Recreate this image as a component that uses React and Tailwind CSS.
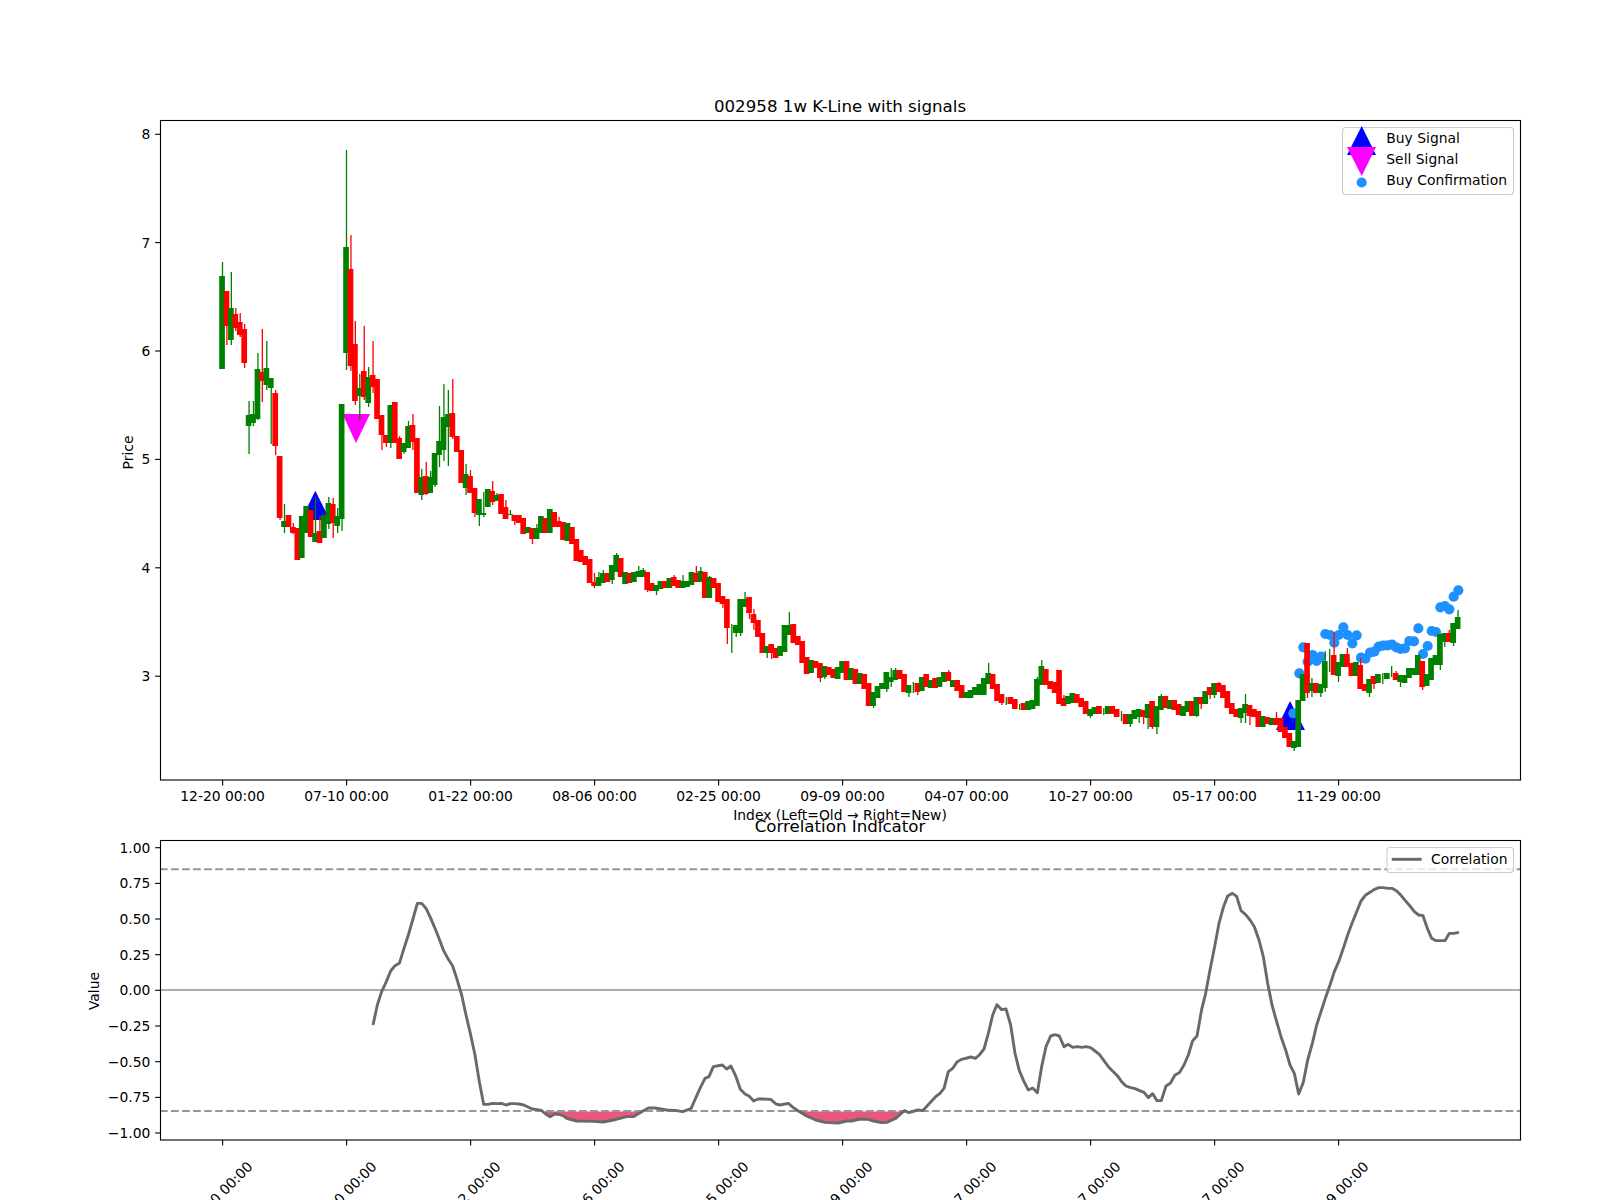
import React from "react";

const text = "font-['DejaVu_Sans',sans-serif] text-[13.89px] fill-black";
const title = "font-['DejaVu_Sans',sans-serif] text-[16.67px] fill-black";

const tickNames = ["12-20 00:00", "07-10 00:00", "01-22 00:00", "08-06 00:00", "02-25 00:00", "09-09 00:00", "04-07 00:00", "10-27 00:00", "05-17 00:00", "11-29 00:00"];
const candleX = (i) => 222.6 + 4.4286 * i;

// [up, bodyTop, bodyBottom, wickTop, wickBottom] read off in pixels, 1 = green, 0 = red
const candles = [
  [1,276,369,262,369],[0,291,326,291,345],[1,308,340,272,345],[0,314,328,308,331],[0,322,335,313,337],[0,329,363,324,368],
  [1,415,426,401,454],[1,414,423,401,426],[1,369,419,353,420],[0,372,381,329,402],[1,368,385,341,390],[1,378,388,378,444],
  [0,393,446,390,455],[0,456,518,456,520],[1,521,527,504,533],[0,515,527],[0,527,533,523,534],[0,528,560],
  [1,516,558],[1,506,533],[0,510,537],[1,533,542,497,542],[0,531,543,516,543],[1,515,538],
  [1,503,524,497,529],[0,504,523,498,538],[1,516,526,508,533],[1,404,519,404,531],[1,247,353,150,370],[0,269,366,235,371],
  [0,344,401,321,405],[1,388,396,374,420],[0,371,397,326,400],[1,377,403,367,407],[0,375,387,341,393],[0,379,419],
  [0,415,435,415,450],[0,435,443,435,447],[1,405,443,405,448],[0,402,443],[0,438,459,436,459],[1,443,452,443,454],
  [1,426,448,421,448],[0,425,442,414,450],[0,438,493],[1,477,495,469,500],[0,476,494,462,495],[1,477,493,471,493],
  [1,453,485,453,487],[1,441,455,406,467],[1,417,450,384,461],[1,414,427,390,466],[0,413,437,379,439],[0,436,452],
  [0,450,483],[1,474,488,464,495],[0,476,493,470,493],[0,488,513,488,517],[1,499,515,499,526],[1,513,515,492,517],
  [1,489,507],[0,491,502,481,505],[1,495,501,493,501],[0,494,514],[0,507,519,500,519],[1,514,515,510,515],
  [0,515,521,515,525],[0,515,523],[0,518,534],[1,527,533],[0,528,539,528,544],[1,528,539,524,539],
  [1,516,533],[0,518,533],
  [1,509,533],[0,512,527],[0,521,527,517,527],[0,522,540],[1,523,541],[0,527,544],
  [0,539,561],[0,550,562],[0,556,565],[0,559,583],[0,582,586,573,588],[1,577,586,572,586],
  [1,573,583,570,583],[0,573,582],[1,565,580,565,584],[1,555,572,553,572],[0,558,577],[1,572,584],
  [0,573,583],[1,572,582],[1,571,577,566,577],[1,570,577,568,577],[0,572,590,572,592],[0,583,591],
  [1,585,591,585,595],[1,581,589],[0,581,588],[1,578,588],[0,577,586,575,586],[0,580,588],
  [1,581,588,575,588],[1,581,587],[1,572,585],[0,573,582,566,582],[1,571,582,567,582],[0,572,598],
  [1,577,598,576,598],[0,578,588],[0,583,602],[0,596,604,596,608],[0,599,628,599,644],[1,624,624,624,653],
  [1,625,633,625,637],[1,599,633,599,636],[1,599,607,592,607],[0,597,613,597,619],[0,614,623,609,630],[0,620,637],
  [0,633,653],[1,646,653,646,658],[0,644,653,644,659],[0,648,658],[1,646,656],[1,625,652],
  [1,625,635,612,635],[0,624,643],[0,636,645],[0,641,663],[0,657,674],[1,660,673],
  [0,661,668],[0,663,678,663,682],[1,666,677,666,679],[0,667,675],[0,669,678],[1,667,679],
  [1,661,673],[0,661,680],[1,668,680],[0,669,684],[1,673,684],[0,674,689],
  [0,683,706],[1,692,706,692,708],[1,686,698],[1,683,689],[1,672,689,672,692],[1,677,682,668,687],
  [1,670,680,668,680],[0,670,679],[0,674,692],[1,685,693,685,697],[1,682,682,682,693],[0,683,692,683,695],
  [1,677,691],[0,674,687],[1,680,688],[0,678,688],[1,677,687],[1,672,682],
  [0,672,681,670,681],
  [1,680,687],[0,680,691],[0,685,698],[1,692,698],[1,690,698],[1,687,695],
  [1,684,695],[1,678,695],[1,673,684,663,684],[0,674,689],[0,684,701],[0,694,703,694,705],
  [1,697,697,697,705],[0,697,704],[0,699,709],[1,704,704,704,710],[0,703,710],[1,701,710],
  [1,700,709],[1,679,706,677,706],[1,666,685,660,685],[0,669,685],[0,681,689],[0,682,693],
  [0,670,704],[0,698,706,695,706],[1,696,704],[1,693,703],[0,694,703],[0,698,707],
  [0,701,714],[1,709,716,709,718],[1,707,714],[0,706,714],[1,708,708,708,715],[1,706,714],
  [0,706,714],[0,709,717],[1,711,711,711,721],[0,714,724],[1,714,724,714,727],[1,710,719],
  [1,709,717,709,723],[0,710,717,710,724],[1,704,718,704,729],[0,701,727,701,729],[1,706,727,706,734],[1,696,710,694,710],
  [0,696,708],[1,700,709],[0,700,710],[0,704,715],[1,706,716],[1,701,712],
  [0,701,716],[1,697,716,697,717],[0,697,704,697,709],[1,691,704],[0,687,695,687,699],[1,683,695,683,698],
  [0,683,692,682,692],[0,685,698],[0,691,708],[0,703,714],[0,709,717],[1,708,718,708,723],
  [1,704,713,694,723],[0,705,716,705,725],[0,709,717],[0,711,727],[1,716,727],[0,717,724],
  [1,718,725],[0,718,725,712,725],[0,718,732],[0,727,738],[0,733,747],[1,741,748,741,751],
  [1,700,747],[1,674,701],[0,643,693,643,698],[1,683,691,678,697],[0,683,693],[1,684,693,684,697],
  [1,661,688,651,692],[1,649,649,649,672],[0,655,675,632,675],[1,662,676,662,682],[1,654,667],[0,654,667,648,667],
  [0,663,676],[1,662,676],[0,665,689,658,689],[0,684,691],[1,679,693,679,697],[0,676,684,676,689],
  [1,674,683],[1,673,673,673,684],[1,673,679],[1,666,666,666,677],[0,673,680,671,680],[1,675,682,675,687],
  [1,675,683],[1,668,678],[1,668,675],[1,655,675],[0,661,687,661,690],[1,674,686],
  [1,658,680],[1,655,665],[1,634,665,634,670],[1,633,642,633,647],[0,633,642,630,642],[1,623,643,623,646],
  [1,617,629,610,629],
];

// confirmation dots, crop coordinates of x from 1240 and y from 560 at 3x
const dots = [[160,460],[178,340],[190,262],[203,305],[218,285],[230,303],[243,290],[256,222],[270,225],[283,248],[296,225],[310,202],[323,225],[337,250],[350,226],[363,293],[376,296],[390,278],[403,275],[416,260],[429,257],[443,256],[456,254],[469,262],[482,267],[495,265],[508,243],[522,244],[535,205],[549,282],[563,258],[575,213],[588,216],[601,142],[615,138],[628,148],[641,110],[655,91]];

const corrA = [[939,735],[952,675],[965,635],[979,605],[992,573],[1005,557],[1018,550],[1032,505],[1045,465],[1058,420],[1072,370],[1085,370],[1098,385],[1111,412],[1125,445],[1138,478],[1151,512],[1165,538],[1178,558],[1191,598],[1205,645],[1218,705],[1231,760],[1245,825],[1258,905],[1271,973],[1284,973],[1298,970],[1311,971],[1324,970],[1338,975],[1351,971],[1364,971],[1377,972],[1391,975],[1404,981],[1417,987],[1431,989],[1444,991],[1457,1002],[1470,1010],[1484,1002],[1497,1003]];
const corrB = [[11,1008],[20,1015],[50,1023],[100,1024],[130,1026],[160,1020],[200,1010],[220,1010],[245,995],[265,984],[285,984],[320,990],[345,991],[368,995],[393,986],[420,925],[435,895],[447,890],[460,860],[487,855],[500,867],[513,858],[528,890],[541,928],[555,942],[567,948],[581,963],[594,957],[607,957],[632,958],[648,972],[660,975],[685,970],[700,983],[715,993],[740,1008],[767,1020],[795,1027],[835,1029],[860,1023],[875,1023],[900,1017],[925,1018],[940,1023],[965,1028],[980,1027],[1007,1015],[1033,992],[1047,998],[1073,990],[1088,992],[1113,965],[1127,950],[1140,940],[1152,925],[1165,875],[1178,865],[1192,845],[1205,838],[1232,831],[1246,835],[1258,825],[1272,807],[1285,760],[1298,705],[1311,674],[1325,689],[1338,687],[1352,735],[1365,820],[1378,872],[1392,905],[1405,930],[1418,924],[1432,938],[1445,860],[1458,800],[1472,768],[1485,764],[1498,768]];
const corrC = [[12,800],[25,793],[38,802],[52,800],[65,802],[78,800],[92,803],[105,813],[118,823],[145,860],[172,887],[185,905],[198,918],[212,923],[225,926],[252,937],[265,953],[278,941],[291,962],[304,962],[318,918],[331,910],[345,885],[358,878],[372,855],[385,825],[398,782],[411,768],[425,688],[437,640],[450,570],[463,505],[477,430],[490,382],[503,348],[517,340],[530,349],[543,392],[557,404],[570,420],[583,440],[597,480],[610,530],[623,610],[636,675],[650,725],[663,770],[677,810],[690,855],[703,880],[716,942],[730,907],[743,840],[757,790],[770,735],[783,695],[796,655],[810,615],[823,575],[836,545],[850,505],[863,465],[876,430],[890,395],[903,363],[916,346],[930,337],[943,328],[957,323],[970,323],[983,325],[996,325],[1010,333],[1023,346],[1036,362],[1050,378],[1063,395],[1076,405],[1089,407],[1102,445],[1115,475],[1128,482],[1155,482],[1168,460],[1181,460],[1197,457]];

const toReal = (x0, pts) => pts.map(([x, y]) => [x0 + x / 3, 780 + y / 3]);
const corr = [...toReal(60, corrA), ...toReal(560, corrB), ...toReal(1060, corrC)];
const corrLine = corr.map((p) => p.join(",")).join(" ");

const below = (from, to) => {
  const pts = corr.filter(([x, y]) => x > from && x < to && y > 1111);
  return [[from, 1111.5], ...pts, [to, 1111.5]].map((p) => p.join(",")).join(" ");
};

const KlineChart = () => (
  <svg viewBox="0 0 1600 820" className="block h-[820px] w-[1600px] shrink-0 overflow-visible">
    <text x="840" y="112" textAnchor="middle" className={title}>002958 1w K-Line with signals</text>

    <polygon points="315.3,490.7 330,520 301,520" fill="#0000ff" />
    <polygon points="342.5,414 370,414 356,443" fill="#ff00ff" />
    <polygon points="1290,701 1305,730 1276,730" fill="#0000ff" />
    {dots.map(([x, y], i) => (
      <circle key={i} cx={1240 + x / 3} cy={560 + y / 3} r="5.1" fill="#1e90ff" />
    ))}

    {candles.map(([up, t, b, wt = t, wb = b], i) => {
      const x = candleX(i);
      const c = up ? "#008000" : "#ff0000";
      return (
        <g key={i} fill={c}>
          <rect x={x - 0.75} y={wt} width="1.3" height={wb - wt} />
          <rect x={x - 3.4} y={t} width="5.7" height={b - t} />
        </g>
      );
    })}

    <rect x="160.5" y="120.5" width="1360" height="659.5" fill="none" stroke="#000" strokeWidth="1.11" />

    {[[8, 134.3], [7, 242.6], [6, 351], [5, 459.4], [4, 567.8], [3, 676.2]].map(([v, y]) => (
      <g key={v}>
        <line x1="155.2" x2="160" y1={y} y2={y} stroke="#000" strokeWidth="1.11" />
        <text x="150.3" y={y} textAnchor="end" dominantBaseline="central" className={text}>{v}</text>
      </g>
    ))}
    {tickNames.map((name, i) => {
      const x = candleX(i * 28);
      return (
        <g key={name}>
          <line x1={x} x2={x} y1="780" y2="785.4" stroke="#000" strokeWidth="1.11" />
          <text x={x} y="801" textAnchor="middle" className={text}>{name}</text>
        </g>
      );
    })}
    <text x="840" y="820" textAnchor="middle" className={text}>Index (Left=Old → Right=New)</text>
    <text transform="translate(133 452.5) rotate(-90)" textAnchor="middle" className={text}>Price</text>

    <rect x="1342.5" y="127.5" width="171" height="67" rx="3" fill="#fff" fillOpacity="0.8" stroke="#ccc" strokeWidth="1.1" />
    <polygon points="1361.7,126 1376,155 1347,155" fill="#0000ff" />
    <polygon points="1347,147 1376,147 1361.7,176" fill="#ff00ff" />
    <circle cx="1361.7" cy="182.5" r="5.1" fill="#1e90ff" />
    <text x="1386.3" y="143" className={text}>Buy Signal</text>
    <text x="1386.3" y="164" className={text}>Sell Signal</text>
    <text x="1386.3" y="185" className={text}>Buy Confirmation</text>
  </svg>
);

const CorrChart = () => (
  <svg viewBox="0 820 1600 380" className="block h-[380px] w-[1600px] shrink-0 overflow-visible">
    <text x="840" y="831.7" textAnchor="middle" className={title}>Correlation Indicator</text>

    <polygon points={below(543, 641.5)} fill="#e8587a" />
    <polygon points={below(802, 903)} fill="#e8587a" />
    <line x1="160" x2="1520" y1="869.3" y2="869.3" stroke="#969696" strokeWidth="2.1" strokeDasharray="7.7 3.33" />
    <line x1="160" x2="1520" y1="1111" y2="1111" stroke="#969696" strokeWidth="2.1" strokeDasharray="7.7 3.33" />
    <line x1="160" x2="1520" y1="990" y2="990" stroke="#adadad" strokeWidth="2.1" />
    <polyline points={corrLine} fill="none" stroke="#696969" strokeWidth="2.9" strokeLinejoin="round" />

    <rect x="160.5" y="840.5" width="1360" height="299.5" fill="none" stroke="#000" strokeWidth="1.11" />

    {[["1.00", 847.7], ["0.75", 883.4], ["0.50", 919], ["0.25", 954.7], ["0.00", 990.3], ["−0.25", 1026], ["−0.50", 1061.7], ["−0.75", 1097.4], ["−1.00", 1133]].map(([v, y]) => (
      <g key={v}>
        <line x1="155.2" x2="160" y1={y} y2={y} stroke="#000" strokeWidth="1.11" />
        <text x="150.3" y={y} textAnchor="end" dominantBaseline="central" className={text}>{v}</text>
      </g>
    ))}
    {tickNames.map((name, i) => {
      const x = candleX(i * 28);
      return (
        <g key={name}>
          <line x1={x} x2={x} y1="1140" y2="1145.4" stroke="#000" strokeWidth="1.11" />
          <text transform={`translate(${x - 2.5} 1194) rotate(-45)`} textAnchor="middle" dominantBaseline="central" className={text}>{name}</text>
        </g>
      );
    })}
    <text transform="translate(99 991) rotate(-90)" textAnchor="middle" className={text}>Value</text>

    <rect x="1387" y="847.5" width="126.5" height="25" rx="3" fill="#fff" fillOpacity="0.8" stroke="#ccc" strokeWidth="1.1" />
    <line x1="1391.7" x2="1421.7" y1="859.3" y2="859.3" stroke="#696969" strokeWidth="2.9" />
    <text x="1431" y="864" className={text}>Correlation</text>
  </svg>
);

export default function App() {
  return (
    <div className="flex h-[1200px] w-[1600px] flex-col overflow-hidden bg-white">
      <KlineChart />
      <CorrChart />
    </div>
  );
}
